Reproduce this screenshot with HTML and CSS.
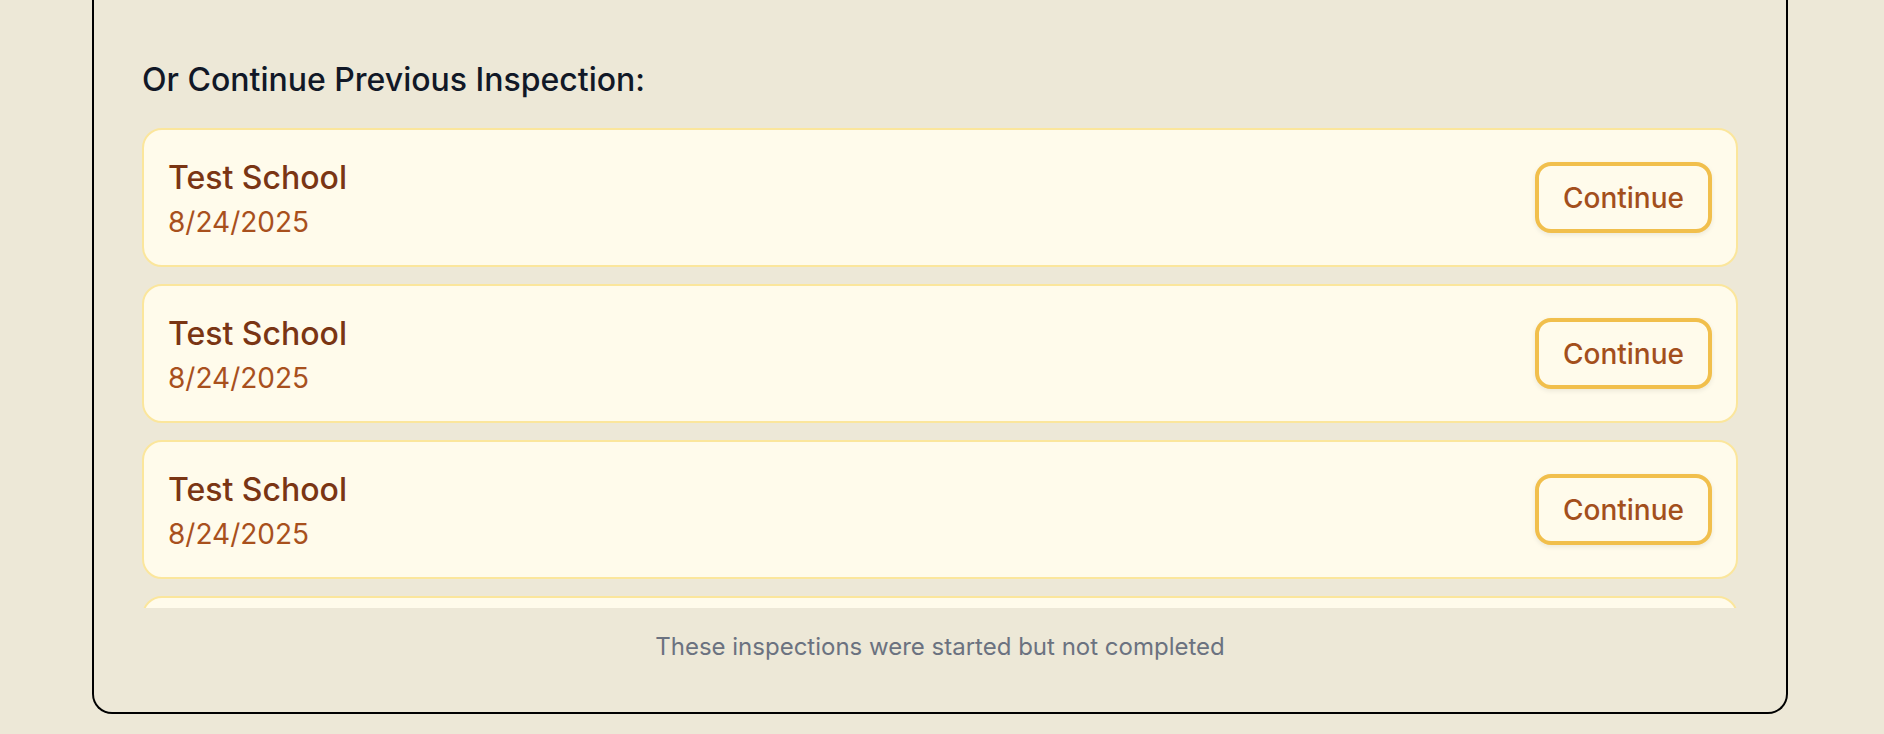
FILE: index.html
```html
<!DOCTYPE html>
<html lang="en">
<head>
<meta charset="utf-8">
<title>Continue Inspection</title>
<link rel="stylesheet" href="styles.css">
</head>
<body>
<main class="page">
  <section class="panel">
    <h2 class="panel-title">Or Continue Previous Inspection:</h2>
    <div class="list">
      <div class="item">
        <div class="item-info">
          <div class="item-name">Test School</div>
          <div class="item-date">8/24/2025</div>
        </div>
        <button class="btn-continue">Continue</button>
      </div>
      <div class="item">
        <div class="item-info">
          <div class="item-name">Test School</div>
          <div class="item-date">8/24/2025</div>
        </div>
        <button class="btn-continue">Continue</button>
      </div>
      <div class="item">
        <div class="item-info">
          <div class="item-name">Test School</div>
          <div class="item-date">8/24/2025</div>
        </div>
        <button class="btn-continue">Continue</button>
      </div>
      <div class="item">
        <div class="item-info">
          <div class="item-name">Test School</div>
          <div class="item-date">8/24/2025</div>
        </div>
        <button class="btn-continue">Continue</button>
      </div>
    </div>
    <p class="panel-note">These inspections were started but not completed</p>
  </section>
</main>
</body>
</html>
```

FILE: styles.css
```css
* { box-sizing: border-box; }
html, body {
  margin: 0;
  padding: 0;
  background: #ede8d7;
  font-family: Inter, "Noto Sans", sans-serif;
}
.page {
  padding-left: 92px;
  width: 1884px;
  height: 734px;
  overflow: hidden;
}
.panel {
  width: 1696px;
  border: 2px solid #000;
  border-top: none;
  border-radius: 0 0 20px 20px;
  padding: 62px 48px 50px;
  display: flex;
  flex-direction: column;
}
.panel-title {
  margin: 0 0 30px;
  font-size: 32px;
  line-height: 36px;
  font-weight: 500;
  color: #111827;
}
.list {
  height: 480px;
  overflow: hidden;
  display: flex;
  flex-direction: column;
  gap: 17px;
}
.item {
  flex: none;
  display: flex;
  align-items: center;
  justify-content: space-between;
  height: 139px;
  padding: 0 24px;
  background: #fffbeb;
  border: 2px solid #fbe69c;
  border-radius: 20px;
}
.item-info {
  display: flex;
  flex-direction: column;
  gap: 4px;
  padding-top: 4px;
}
.item-name {
  font-size: 32px;
  line-height: 40px;
  font-weight: 500;
  color: #7a3514;
}
.item-date {
  font-size: 28px;
  line-height: 40px;
  color: #a8501d;
}
.btn-continue {
  width: 177px;
  height: 71px;
  border: 4px solid #f1bf4c;
  border-radius: 16px;
  background: #fffbeb;
  box-shadow: 0 2px 5px rgba(0,0,0,0.08);
  font-family: Inter, "Noto Sans", sans-serif;
  font-size: 28px;
  font-weight: 500;
  color: #a34f1c;
  cursor: pointer;
}
.panel-note {
  margin: 24px 0 0;
  text-align: center;
  font-size: 24px;
  line-height: 30px;
  color: #6b7280;
}
```
